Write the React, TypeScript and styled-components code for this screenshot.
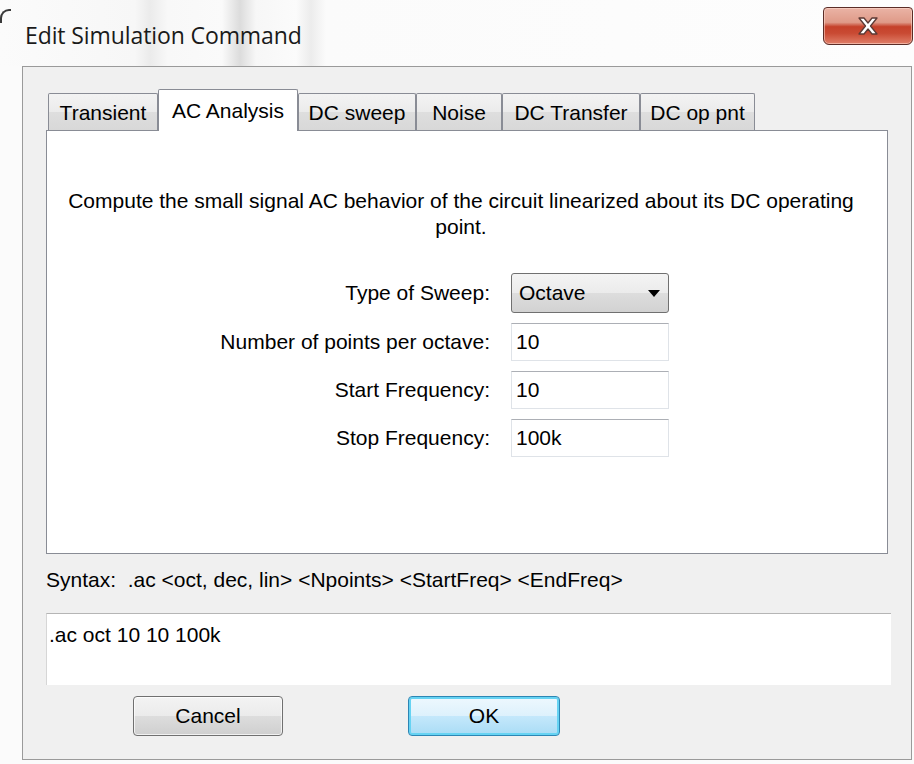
import React from 'react';
import styled, { createGlobalStyle } from 'styled-components';

const GlobalStyle = createGlobalStyle`
  html, body {
    margin: 0;
    padding: 0;
  }
  body {
    background: #fbfbfb;
    font-family: 'Liberation Sans', Arial, sans-serif;
    overflow: hidden;
  }
`;

const Window = styled.div`
  position: relative;
  width: 914px;
  height: 764px;
  background: #fbfbfb;
  overflow: hidden;

  &::before {
    content: '';
    position: absolute;
    left: 0;
    top: 9px;
    width: 9px;
    height: 12px;
    border-left: 2px solid #3a3a3a;
    border-top: 2px solid #3a3a3a;
    border-top-left-radius: 9px;
  }
`;

const TitleBar = styled.div`
  display: flex;
  justify-content: space-between;
  align-items: flex-start;
  height: 66px;
  background: linear-gradient(
    90deg,
    #fbfbfb 0,
    #f7f7f7 135px,
    #ebebeb 150px,
    #f8f8f8 168px,
    #fafafa 222px,
    #dcdcdc 240px,
    #f7f7f7 256px,
    #fbfbfb 296px,
    #ececec 311px,
    #fbfbfb 326px,
    #fdfdfd 100%
  );
`;

const Title = styled.h1`
  margin: 0;
  padding: 20px 0 0 25px;
  font-family: 'Open Sans', 'Noto Sans', sans-serif;
  font-size: 23px;
  font-weight: 400;
  line-height: 31px;
  letter-spacing: -0.1px;
  color: #1a1a1a;
`;

const CloseButton = styled.div`
  box-sizing: border-box;
  display: flex;
  align-items: center;
  justify-content: center;
  width: 90px;
  height: 38px;
  margin: 7px 1px 0 0;
  border: 1px solid #5b2d27;
  border-radius: 4px 4px 6px 6px;
  background: linear-gradient(
    180deg,
    #eab3a5 0%,
    #df9a88 40%,
    #c5412a 52%,
    #c94a33 70%,
    #e07f69 100%
  );
  box-shadow: inset 0 0 0 1px rgba(255, 220, 210, 0.55);
`;

const ClientArea = styled.div`
  box-sizing: border-box;
  display: flex;
  flex-direction: column;
  width: 890px;
  height: 694px;
  margin-left: 22px;
  padding: 22px 0 0 23px;
  background: #f0f0f0;
  border: 1px solid #9a9a9a;
`;

const TabStrip = styled.div`
  display: flex;
  align-items: flex-end;
  height: 41px;
  padding-left: 2px;
  position: relative;
  z-index: 1;
`;

const Tab = styled.div<{ $w: number; $active?: boolean }>`
  box-sizing: border-box;
  width: ${p => p.$w}px;
  height: ${p => (p.$active ? 42 : 37)}px;
  margin-bottom: ${p => (p.$active ? -1 : 0)}px;
  padding-top: ${p => (p.$active ? 9 : 7)}px;
  border: 1px solid #898c95;
  border-bottom: none;
  border-radius: 2px 2px 0 0;
  background: ${p =>
    p.$active
      ? '#ffffff'
      : 'linear-gradient(180deg, #f3f3f3 0%, #ebebeb 50%, #dedede 51%, #d8d8d8 100%)'};
  font-size: 21px;
  line-height: 24px;
  text-align: center;
  color: #000;
  white-space: nowrap;
`;

const TabPage = styled.div`
  box-sizing: border-box;
  width: 842px;
  height: 424px;
  padding-top: 57px;
  background: #fff;
  border: 1px solid #898c95;
`;

const Description = styled.p`
  margin: 0;
  padding-right: 12px;
  font-size: 21px;
  line-height: 26px;
  text-align: center;
  color: #000;
`;

const Form = styled.div`
  display: grid;
  grid-template-columns: 443px 158px;
  column-gap: 21px;
  row-gap: 10px;
  margin-top: 33px;
`;

const Label = styled.label`
  display: flex;
  align-items: center;
  justify-content: flex-end;
  font-size: 21px;
  color: #000;
  white-space: nowrap;
`;

const Combo = styled.div`
  box-sizing: border-box;
  display: flex;
  align-items: center;
  justify-content: space-between;
  height: 40px;
  padding: 0 8px 0 7px;
  border: 1px solid #707070;
  border-radius: 3px;
  background: linear-gradient(180deg, #f4f4f4 0%, #ebebeb 50%, #dddddd 51%, #d2d2d2 100%);
  font-size: 21px;
  color: #000;
`;

const Field = styled.input`
  box-sizing: border-box;
  width: 158px;
  height: 38px;
  padding: 0 4px;
  margin: 0;
  border: 1px solid #dfe3e8;
  border-top-color: #acafb5;
  background: #fff;
  font-family: 'Liberation Sans', Arial, sans-serif;
  font-size: 21px;
  color: #000;
  outline: none;
`;

const Syntax = styled.div`
  margin-top: 14px;
  font-size: 21px;
  line-height: 24px;
  color: #000;
  white-space: pre;
`;

const CommandBox = styled.div`
  box-sizing: border-box;
  width: 845px;
  height: 72px;
  margin-top: 21px;
  padding: 9px 2px 0;
  background: #fff;
  border-top: 1px solid #b5b5b5;
  border-left: 1px solid #d6d6d6;
  font-size: 21px;
  line-height: 24px;
  color: #000;
`;

const ButtonRow = styled.div`
  display: flex;
  gap: 125px;
  margin-top: 11px;
  padding-left: 87px;
`;

const Button = styled.button<{ $default?: boolean; $w: number }>`
  box-sizing: border-box;
  width: ${p => p.$w}px;
  height: 40px;
  padding: 0;
  border: 1px solid ${p => (p.$default ? '#2d86b4' : '#707070')};
  border-radius: 4px;
  background: ${p =>
    p.$default
      ? 'linear-gradient(180deg, #eef8fe 0%, #ddf1fc 50%, #c4e8fb 51%, #a9dcf5 100%)'
      : 'linear-gradient(180deg, #f3f3f3 0%, #ebebeb 50%, #dddddd 51%, #cfcfcf 100%)'};
  box-shadow: ${p =>
    p.$default ? 'inset 0 0 0 2px #66d3f3' : 'inset 0 0 0 1px rgba(255, 255, 255, 0.7)'};
  font-family: 'Liberation Sans', Arial, sans-serif;
  font-size: 21px;
  color: #000;
`;

const tabs = [
  { label: 'Transient', w: 110 },
  { label: 'AC Analysis', w: 140, active: true },
  { label: 'DC sweep', w: 118 },
  { label: 'Noise', w: 86 },
  { label: 'DC Transfer', w: 138 },
  { label: 'DC op pnt', w: 115 },
];

const fields = [
  { label: 'Number of points per octave:', value: '10' },
  { label: 'Start Frequency:', value: '10' },
  { label: 'Stop Frequency:', value: '100k' },
];

const CloseGlyph = () => (
  <svg width="24" height="20" viewBox="0 0 24 20">
    <path
      d="M3 2h5l4 5 4-5h5l-6.5 8 6.5 8h-5l-4-5-4 5H3l6.5-8z"
      fill="#fff"
      stroke="#5c3a35"
      strokeWidth="1.3"
      strokeLinejoin="round"
    />
  </svg>
);

const DropArrow = () => (
  <svg width="12" height="7" viewBox="0 0 12 7">
    <path d="M0 0h12L6 7z" fill="#000" />
  </svg>
);

export default function App() {
  return (
    <>
      <GlobalStyle />
      <Window>
        <TitleBar>
          <Title>Edit Simulation Command</Title>
          <CloseButton>
            <CloseGlyph />
          </CloseButton>
        </TitleBar>
        <ClientArea>
          <TabStrip>
            {tabs.map(t => (
              <Tab key={t.label} $w={t.w} $active={t.active}>
                {t.label}
              </Tab>
            ))}
          </TabStrip>
          <TabPage>
            <Description>
              Compute the small signal AC behavior of the circuit linearized about its DC operating
              <br />
              point.
            </Description>
            <Form>
              <Label>Type of Sweep:</Label>
              <Combo>
                <span>Octave</span>
                <DropArrow />
              </Combo>
              {fields.map(f => (
                <React.Fragment key={f.label}>
                  <Label>{f.label}</Label>
                  <Field readOnly defaultValue={f.value} />
                </React.Fragment>
              ))}
            </Form>
          </TabPage>
          <Syntax>{'Syntax:  .ac <oct, dec, lin> <Npoints> <StartFreq> <EndFreq>'}</Syntax>
          <CommandBox>.ac oct 10 10 100k</CommandBox>
          <ButtonRow>
            <Button $w={150}>Cancel</Button>
            <Button $w={152} $default>
              OK
            </Button>
          </ButtonRow>
        </ClientArea>
      </Window>
    </>
  );
}
